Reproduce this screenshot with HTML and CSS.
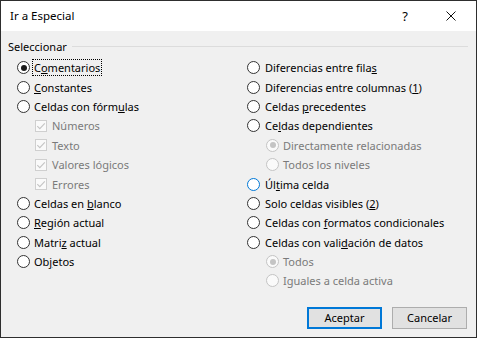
FILE: index.html
```html
<!DOCTYPE html>
<html lang="es">
<head>
<meta charset="utf-8">
<title>Ir a Especial</title>
<link rel="stylesheet" href="styles.css">
</head>
<body>
<div class="dialog">
  <div class="titlebar">
    <span class="title">Ir a Especial</span>
    <span class="tb-btn help">?</span>
    <span class="tb-btn close">
      <svg width="10" height="10" viewBox="0 0 10 10"><path d="M0.5 0.5 L9.5 9.5 M9.5 0.5 L0.5 9.5" stroke="#111" stroke-width="1" fill="none"/></svg>
    </span>
  </div>
  <div class="content">
    <div class="group-head">
      <span class="group-label">Seleccionar</span>
      <span class="group-line"></span>
    </div>
    <div class="columns">
      <div class="col col-left">
        <div class="row"><span class="radio checked"></span><span class="label focus">C<u>o</u>mentarios</span></div>
        <div class="row"><span class="radio"></span><span class="label"><u>C</u>onstantes</span></div>
        <div class="row"><span class="radio"></span><span class="label">Celdas con fórm<u>u</u>las</span></div>
        <div class="row sub-check"><span class="check"><svg width="12" height="12" viewBox="0 0 12 12"><path d="M2.3 6.2 L4.8 8.7 L9.8 3.4" stroke="#c4c4c4" stroke-width="1.1" fill="none"/></svg></span><span class="label disabled">Números</span></div>
        <div class="row sub-check"><span class="check"><svg width="12" height="12" viewBox="0 0 12 12"><path d="M2.3 6.2 L4.8 8.7 L9.8 3.4" stroke="#c4c4c4" stroke-width="1.1" fill="none"/></svg></span><span class="label disabled">Texto</span></div>
        <div class="row sub-check"><span class="check"><svg width="12" height="12" viewBox="0 0 12 12"><path d="M2.3 6.2 L4.8 8.7 L9.8 3.4" stroke="#c4c4c4" stroke-width="1.1" fill="none"/></svg></span><span class="label disabled">Valores lógicos</span></div>
        <div class="row sub-check"><span class="check"><svg width="12" height="12" viewBox="0 0 12 12"><path d="M2.3 6.2 L4.8 8.7 L9.8 3.4" stroke="#c4c4c4" stroke-width="1.1" fill="none"/></svg></span><span class="label disabled">Errores</span></div>
        <div class="row"><span class="radio"></span><span class="label">Celdas en <u>b</u>lanco</span></div>
        <div class="row"><span class="radio"></span><span class="label"><u>R</u>egión actual</span></div>
        <div class="row"><span class="radio"></span><span class="label">Matri<u>z</u> actual</span></div>
        <div class="row"><span class="radio"></span><span class="label">Ob<u>j</u>etos</span></div>
      </div>
      <div class="col col-right">
        <div class="row"><span class="radio"></span><span class="label">Diferencias entre fila<u>s</u></span></div>
        <div class="row"><span class="radio"></span><span class="label">Diferencias entre columnas (<u>1</u>)</span></div>
        <div class="row"><span class="radio"></span><span class="label">Celdas <u>p</u>recedentes</span></div>
        <div class="row"><span class="radio"></span><span class="label">Ce<u>l</u>das dependientes</span></div>
        <div class="row sub-radio"><span class="radio disabled checked"></span><span class="label disabled">Directamente relacionadas</span></div>
        <div class="row sub-radio"><span class="radio disabled"></span><span class="label disabled">Todos los niveles</span></div>
        <div class="row"><span class="radio hover"></span><span class="label">Úl<u>t</u>ima celda</span></div>
        <div class="row"><span class="radio"></span><span class="label">Solo celdas visibles (<u>2</u>)</span></div>
        <div class="row"><span class="radio"></span><span class="label">Celdas con <u>f</u>ormatos condicionales</span></div>
        <div class="row"><span class="radio"></span><span class="label">Celdas con vali<u>d</u>ación de datos</span></div>
        <div class="row sub-radio"><span class="radio disabled checked"></span><span class="label disabled">Todos</span></div>
        <div class="row sub-radio"><span class="radio disabled"></span><span class="label disabled">Iguales a celda activa</span></div>
      </div>
    </div>
    <div class="footer">
      <button class="btn default">Aceptar</button>
      <button class="btn">Cancelar</button>
    </div>
  </div>
</div>
</body>
</html>
```
FILE: styles.css
```css
html, body {
  margin: 0;
  padding: 0;
  background: #f0f0f0;
}
body {
  font-family: "Noto Sans", "Open Sans", sans-serif;
  font-size: 11px;
  color: #000;
}
.dialog {
  width: 477px;
  height: 338px;
  box-sizing: border-box;
  border: 1px solid #2e2e2e;
  background: #f0f0f0;
  display: flex;
  flex-direction: column;
}
.titlebar {
  height: 30px;
  background: #fff;
  display: flex;
  align-items: center;
  flex: none;
}
.title {
  flex: 1;
  padding-left: 9px;
  font-size: 11.5px;
  padding-bottom: 1px;
}
.tb-btn {
  width: 46px;
  height: 30px;
  display: flex;
  align-items: center;
  justify-content: center;
}
.help {
  font-size: 13px;
  padding-bottom: 1px;
}
.close {
  margin-right: 2px;
}
.content {
  flex: 1;
  display: flex;
  flex-direction: column;
  padding: 0 8px 0 7px;
}
.group-head {
  display: flex;
  align-items: center;
  height: 16px;
  margin-top: 8px;
}
.group-label {
  line-height: 16px;
  padding-right: 5px;
}
.group-line {
  flex: 1;
  height: 1px;
  background: #dcdcdc;
  margin-top: -2px;
}
.columns {
  display: grid;
  grid-template-columns: 239px 1fr;
  margin-top: 3px;
}
.col-left {
  padding-left: 9px;
}
.row {
  height: 19.4px;
  display: flex;
  align-items: center;
}
.radio {
  width: 13px;
  height: 13px;
  box-sizing: border-box;
  border: 1px solid #333;
  border-radius: 50%;
  background: #fff;
  margin-right: 4px;
  flex: none;
  display: flex;
  align-items: center;
  justify-content: center;
}
.col-right > .row > .radio {
  margin-right: 5px;
}
.radio.checked::after {
  content: "";
  width: 6px;
  height: 6px;
  border-radius: 50%;
  background: #1a1a1a;
}
.radio.disabled {
  border-color: #c4c4c4;
  background: #fafafa;
}
.radio.disabled.checked::after {
  background: #c4c4c4;
}
.radio.hover {
  border: 1.5px solid #0078d7;
}
.col-right > .row.sub-radio > .radio {
  margin-right: 4px;
}
.sub-radio {
  padding-left: 19px;
}
.sub-check {
  padding-left: 18px;
}
.check {
  width: 12px;
  height: 12px;
  box-sizing: border-box;
  border: 1px solid #cfcfcf;
  background: #fafafa;
  margin-right: 5px;
  flex: none;
  position: relative;
}
.check svg {
  position: absolute;
  left: -1px;
  top: -1px;
}
.label {
  white-space: nowrap;
  line-height: 15px;
  padding: 0 1px;
  border: 1px solid transparent;
}
.label u {
  text-underline-offset: 1px;
}
.label.focus {
  border: 1px dotted #000;
}
.label.disabled {
  color: #7a7a7a;
}
.col-left > .row > .label {
  margin-left: -2px;
}
.col-right > .row > .label {
  margin-left: -2px;
}
.footer {
  display: flex;
  justify-content: flex-end;
  gap: 10px;
  margin-top: 16px;
  padding-right: 1px;
}
.btn {
  width: 75px;
  height: 22px;
  box-sizing: border-box;
  font-family: "Noto Sans", "Open Sans", sans-serif;
  font-size: 11px;
  color: #000;
  background: #e1e1e1;
  border: 1px solid #adadad;
  padding: 0 0 1px 0;
  margin: 0;
}
.btn.default {
  border: 1px solid #0078d7;
  box-shadow: inset 0 0 0 1px #0078d7;
}
```
